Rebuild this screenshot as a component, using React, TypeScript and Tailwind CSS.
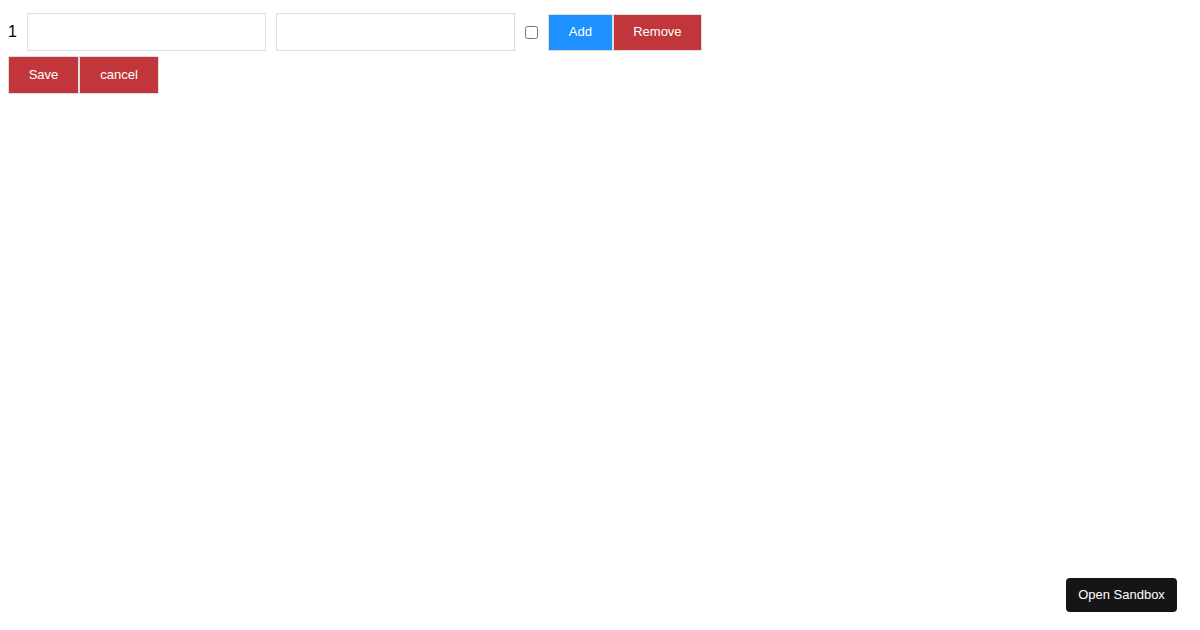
const App = () => {
  return (
    <div className="min-h-screen bg-white p-2 font-['Liberation_Sans',Arial,sans-serif] text-black">
      <div className="mt-[5px] flex items-center gap-[10px]">
        <span className="text-base">1</span>
        <input
          type="text"
          className="h-[38px] w-[239px] border border-[#dddddd] px-2 text-sm outline-none"
        />
        <input
          type="text"
          className="h-[38px] w-[239px] border border-[#dddddd] px-2 text-sm outline-none"
        />
        <input type="checkbox" className="h-[13px] w-[13px]" />
        <div className="flex">
          <button className="h-[37px] w-[65px] border border-[#dddddd] bg-[#1e90ff] text-[13px] text-white">
            Add
          </button>
          <button className="h-[37px] w-[89px] border border-[#dddddd] bg-[#c0363a] text-[13px] text-white">
            Remove
          </button>
        </div>
      </div>
      <div className="mt-[5px] flex">
        <button className="h-[38px] w-[71px] border border-[#dddddd] bg-[#c0363a] text-[13px] text-white">
          Save
        </button>
        <button className="h-[38px] w-[80px] border border-[#dddddd] bg-[#c0363a] text-[13px] text-white">
          cancel
        </button>
      </div>
      <button className="fixed bottom-[18px] right-[23px] h-[34px] w-[111px] rounded-[4px] bg-[#151515] text-[13px] text-white">
        Open Sandbox
      </button>
    </div>
  );
};

export default App;
